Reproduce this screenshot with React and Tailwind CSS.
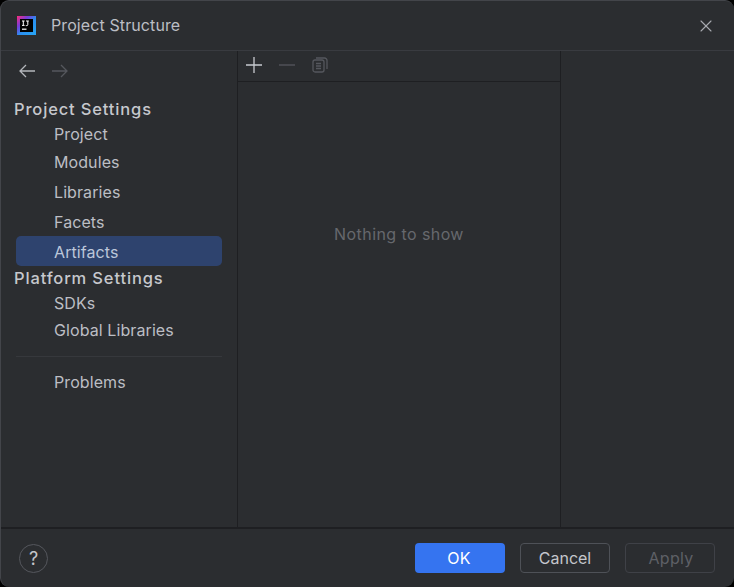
import { X } from 'lucide-react';

const NavItem = ({ label, height, selected }) => (
    <div className={`flex items-center pl-[38px] rounded-[5px] text-[16px] tracking-[0.09px] ${height} ${selected ? 'bg-[#2e436e] text-[#bcc7da]' : 'text-[#bcbec4]'}`}>
        {label}
    </div>
);

const NavHeading = ({ label, height }) => (
    <div className={`-ml-[2px] flex items-center text-[16.5px] font-[450] tracking-[0.85px] text-[#c6c8cd] ${height}`}>
        {label}
    </div>
);

// IntelliJ style logo
const ProjectLogo = () => (
    <svg width="19" height="19" viewBox="0 0 19 19">
        <defs>
            <linearGradient id="logo-edge" x1="0" y1="0" x2="1" y2="1">
                <stop offset="0" stopColor="#ff2d78" />
                <stop offset="0.3" stopColor="#7a3bd8" />
                <stop offset="0.55" stopColor="#2a8ff0" />
                <stop offset="1" stopColor="#27a6f5" />
            </linearGradient>
        </defs>
        <rect width="19" height="19" fill="url(#logo-edge)" />
        <rect x="3" y="3" width="13" height="13" fill="#000" />
        <path d="M5 5h2.600M6.300 5v4.400M5 9.400h2.600M9 5h2.800M10.800 5v3.600a1 1 0 0 1-1 1H8.800" fill="none" stroke="#fff" strokeWidth="1" />
        <path d="M5 13.200h4.500" stroke="#fff" strokeWidth="1.2" />
    </svg>
);

const ArrowLeftIcon = ({ color }) => (
    <svg width="16" height="14" viewBox="0 0 16 14" fill="none" stroke={color} strokeWidth="1.3">
        <path d="M1 7h15M7 1 1 7l6 6" />
    </svg>
);

const ArrowRightIcon = ({ color }) => (
    <svg width="16" height="14" viewBox="0 0 16 14" fill="none" stroke={color} strokeWidth="1.3">
        <path d="M0 7h15M9 1l6 6-6 6" />
    </svg>
);

const PlusIcon = () => (
    <svg width="18" height="18" viewBox="0 0 18 18" fill="none" stroke="#c8cacf" strokeWidth="1.3">
        <path d="M1 9h16M9 1v16" />
    </svg>
);

const MinusIcon = () => (
    <svg width="18" height="18" viewBox="0 0 18 18" fill="none" stroke="#55575d" strokeWidth="1.3">
        <path d="M1 9h16" />
    </svg>
);

const CopyIcon = () => (
    <svg width="16" height="16" viewBox="0 0 16 16" fill="none" stroke="#55575d" strokeWidth="1.3">
        <rect x="1" y="3" width="11" height="12" rx="2" />
        <path d="M4 1h8.500a2.500 2.500 0 0 1 2.500 2.500V12" />
        <path d="M4 6.500h5M4 9h5M4 11.500h5" />
    </svg>
);

const App = () => {
    return (
        <div className="w-[734px] h-[587px] bg-black overflow-hidden font-['Inter',sans-serif]">
            <div className="w-full h-full flex flex-col bg-[#2b2d30] rounded-[9px] border border-[#43454a] border-b-0 border-r-0">
                {/* Title bar */}
                <div className="h-[50px] flex-none flex items-center pl-[16px] pr-[18px] border-b border-[#393b40]">
                    <ProjectLogo />
                    <span className="ml-[15px] -mt-[1px] text-[16px] tracking-[0.1px] text-[#bcbec4]">Project Structure</span>
                    <X className="ml-auto text-[#a8aab0]" size={20} strokeWidth={1.3} />
                </div>

                {/* Body */}
                <div className="flex-1 flex min-h-0 border-b-2 border-[#1e1f22]">
                    {/* Sidebar */}
                    <div className="w-[237px] flex-none flex flex-col pl-[15px] pr-[15px] pt-[9px] border-r border-[#1e1f22]">
                        <div className="flex items-center gap-[17px] h-[22px] pl-[3px] mb-[16px]">
                            <ArrowLeftIcon color="#b4b6bb" />
                            <ArrowRightIcon color="#55575d" />
                        </div>
                        <NavHeading label="Project Settings" height="h-[22px]" />
                        <NavItem label="Project" height="h-[28px]" />
                        <NavItem label="Modules" height="h-[28px]" />
                        <NavItem label="Libraries" height="h-[30px] pt-[2px]" />
                        <NavItem label="Facets" height="h-[30px] pt-[2px]" />
                        <NavItem label="Artifacts" height="h-[30px] pt-[2px]" selected />
                        <NavHeading label="Platform Settings" height="h-[24px]" />
                        <NavItem label="SDKs" height="h-[26px]" />
                        <NavItem label="Global Libraries" height="h-[28px]" />
                        <div className="h-px bg-[#36383c] mt-[12px] mb-[11px]"></div>
                        <NavItem label="Problems" height="h-[28px]" />
                    </div>

                    {/* Middle column */}
                    <div className="w-[323px] flex-none flex flex-col border-r border-[#1e1f22]">
                        <div className="h-[31px] flex-none flex items-center pl-[7px] gap-[15px] pb-[2px] border-b border-[#1e1f22]">
                            <PlusIcon />
                            <MinusIcon />
                            <span className="ml-px"><CopyIcon /></span>
                        </div>
                        <div className="flex-1 flex justify-center pt-[142px] text-[16px] leading-[20px] tracking-[0.42px] text-[#66686d]">
                            Nothing to show
                        </div>
                    </div>

                    {/* Right column */}
                    <div className="flex-1"></div>
                </div>

                {/* Footer */}
                <div className="h-[58px] flex-none flex items-center pl-[18px] pr-[19px]">
                    <div className="w-[29px] h-[29px] rounded-full border border-[#55575d] flex items-center justify-center text-[18px] text-[#c4c6cb]">?</div>
                    <div className="ml-auto flex gap-[15px]">
                        <button className="w-[90px] h-[30px] rounded-[4px] bg-[#3574f0] text-white text-[16px] tracking-[0.2px] pr-[2px]">OK</button>
                        <button className="w-[90px] h-[30px] rounded-[4px] border border-[#4e5157] text-[#c4c6cb] text-[16px]">Cancel</button>
                        <button className="w-[90px] h-[30px] rounded-[4px] border border-[#3f4147] text-[#5e6066] text-[16px] tracking-[0.3px] pl-[2px]">Apply</button>
                    </div>
                </div>
            </div>
        </div>
    );
};

export default App;
